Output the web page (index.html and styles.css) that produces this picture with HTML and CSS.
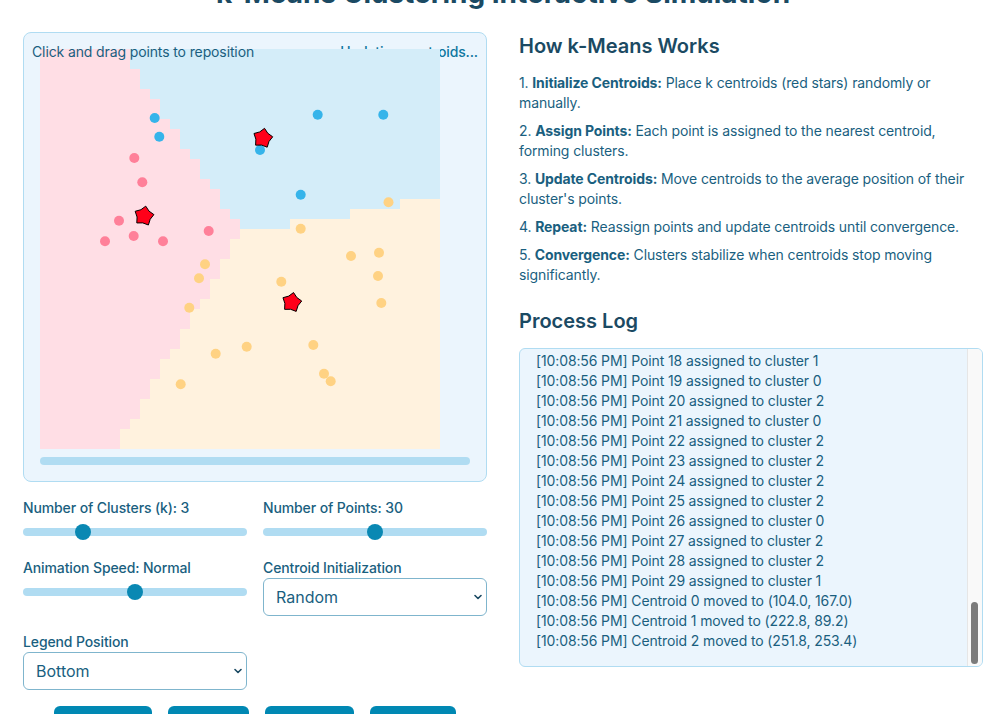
FILE: index.html
```html
<!DOCTYPE html>
<html lang="en">
<head>
<meta charset="utf-8">
<title>k-Means Clustering Interactive Simulation</title>
<link rel="stylesheet" href="styles.css">
</head>
<body>
<div class="page">
  <h1 class="title">k-Means Clustering Interactive Simulation</h1>
  <div class="layout">
    <section class="left">
      <div class="viz-card">
        <div class="status">Updating centroids...</div>
        <svg class="plot" width="400" height="400" viewBox="0 0 400 400">
          <defs>
            <polygon id="star" points="1.74,-9.85 5.04,-4.86 9.9,-1.39 6.18,3.29 4.38,8.99 -1.22,6.89 -7.19,6.95 -6.93,0.97 -8.83,-4.69 -3.07,-6.29" fill="#ff0019" stroke="#000" stroke-width="1" stroke-linejoin="miter"/>
          </defs>
          <rect x="0" y="0" width="400" height="400" fill="#fff2de"/>
          <path fill="#ffdee5" d="M0 0 H90 V20 H100 V40 H110 V50 H120 V70 H130 V80 H140 V100 H150 V110 H160 V130 H170 V140 H180 V160 H190 V170 H200 V190 H190 V210 H180 V230 H170 V250 H160 V260 H150 V280 H140 V300 H130 V310 H120 V330 H110 V350 H100 V370 H90 V380 H80 V400 H0 Z"/>
          <path fill="#d4edf9" d="M90 0 H400 V150 H360 V160 H310 V170 H250 V180 H200 V170 H190 V160 H180 V140 H170 V130 H160 V110 H150 V100 H140 V80 H130 V70 H120 V50 H110 V40 H100 V20 H90 Z"/>
          <g fill="#36b4ea">
            <circle cx="114.7" cy="69" r="5"/>
            <circle cx="119.3" cy="87.7" r="5"/>
            <circle cx="220" cy="101" r="5"/>
            <circle cx="277.7" cy="65.7" r="5"/>
            <circle cx="343.3" cy="65.7" r="5"/>
            <circle cx="260.7" cy="145.7" r="5"/>
          </g>
          <g fill="#ff8099">
            <circle cx="94.3" cy="109" r="5"/>
            <circle cx="102.3" cy="133.3" r="5"/>
            <circle cx="79" cy="171.7" r="5"/>
            <circle cx="93.7" cy="187" r="5"/>
            <circle cx="65" cy="192.3" r="5"/>
            <circle cx="123" cy="192.3" r="5"/>
            <circle cx="168.7" cy="182" r="5"/>
          </g>
          <g fill="#ffd283">
            <circle cx="348.5" cy="153.3" r="5"/>
            <circle cx="260.7" cy="179.7" r="5"/>
            <circle cx="311" cy="207" r="5"/>
            <circle cx="339" cy="203.7" r="5"/>
            <circle cx="165" cy="215.3" r="5"/>
            <circle cx="159" cy="229.3" r="5"/>
            <circle cx="241.3" cy="232.7" r="5"/>
            <circle cx="338" cy="227" r="5"/>
            <circle cx="341.3" cy="254" r="5"/>
            <circle cx="149.3" cy="258.7" r="5"/>
            <circle cx="206.7" cy="297.7" r="5"/>
            <circle cx="175.7" cy="304.7" r="5"/>
            <circle cx="273.3" cy="296" r="5"/>
            <circle cx="284" cy="324.7" r="5"/>
            <circle cx="290.7" cy="332.3" r="5"/>
            <circle cx="140.7" cy="335.3" r="5"/>
          </g>
          <use href="#star" transform="translate(104 167)"/>
          <use href="#star" transform="translate(222.8 89.2)"/>
          <use href="#star" transform="translate(251.8 253.4)"/>
        </svg>
        <div class="hint">Click and drag points to reposition</div>
        <div class="progress"></div>
      </div>

      <div class="controls">
        <div class="control">
          <label class="control-label">Number of Clusters (k): 3</label>
          <input class="range" type="range" min="2" max="6" value="3">
        </div>
        <div class="control">
          <label class="control-label">Number of Points: 30</label>
          <input class="range" type="range" min="10" max="50" value="30">
        </div>
        <div class="control">
          <label class="control-label">Animation Speed: Normal</label>
          <input class="range" type="range" min="1" max="3" value="2">
        </div>
        <div class="control">
          <label class="control-label">Centroid Initialization</label>
          <div class="select-wrap">
            <select class="select">
              <option>Random</option>
              <option>k-Means++</option>
              <option>Manual</option>
            </select>
            <svg class="chevron" width="8" height="6" viewBox="0 0 8 6"><path d="M1 1.5 L4 4.5 L7 1.5" fill="none" stroke="#1b4a63" stroke-width="1.6" stroke-linecap="round" stroke-linejoin="round"/></svg>
          </div>
        </div>
        <div class="control">
          <label class="control-label">Legend Position</label>
          <div class="select-wrap">
            <select class="select">
              <option>Bottom</option>
              <option>Top</option>
              <option>Right</option>
            </select>
            <svg class="chevron" width="8" height="6" viewBox="0 0 8 6"><path d="M1 1.5 L4 4.5 L7 1.5" fill="none" stroke="#1b4a63" stroke-width="1.6" stroke-linecap="round" stroke-linejoin="round"/></svg>
          </div>
        </div>
      </div>

      <div class="buttons">
        <button class="btn btn-wide">Initialize</button>
        <button class="btn">Start</button>
        <button class="btn">Pause</button>
        <button class="btn">Reset</button>
      </div>
    </section>

    <section class="right">
      <h2 class="heading">How k-Means Works</h2>
      <div class="steps">
        <p>1. <strong>Initialize Centroids:</strong> Place k centroids (red stars) randomly or manually.</p>
        <p>2. <strong>Assign Points:</strong> Each point is assigned to the nearest centroid, forming clusters.</p>
        <p>3. <strong>Update Centroids:</strong> Move centroids to the average position of their cluster's points.</p>
        <p>4. <strong>Repeat:</strong> Reassign points and update centroids until convergence.</p>
        <p>5. <strong>Convergence:</strong> Clusters stabilize when centroids stop moving significantly.</p>
      </div>

      <h2 class="heading log-heading">Process Log</h2>
      <div class="log-box">
        <div class="log">
          <div class="log-inner">
            <div>[10:08:54 PM] Generated 30 random points</div>
            <div>[10:08:54 PM] Number of clusters set to 3</div>
            <div>[10:08:54 PM] Simulation initialized</div>
            <div>[10:08:54 PM] Initializing 3 centroids (random)</div>
            <div>[10:08:54 PM] Centroid 0 initialized at (61.3, 212.5)</div>
            <div>[10:08:54 PM] Centroid 1 initialized at (188.4, 42.7)</div>
            <div>[10:08:54 PM] Centroid 2 initialized at (297.1, 301.9)</div>
            <div>[10:08:55 PM] Iteration 1: assigning points</div>
            <div>[10:08:55 PM] Point 0 assigned to cluster 2</div>
            <div>[10:08:55 PM] Point 1 assigned to cluster 0</div>
            <div>[10:08:55 PM] Point 2 assigned to cluster 1</div>
            <div>[10:08:55 PM] Point 3 assigned to cluster 2</div>
            <div>[10:08:55 PM] Point 4 assigned to cluster 0</div>
            <div>[10:08:55 PM] Point 5 assigned to cluster 2</div>
            <div>[10:08:55 PM] Point 6 assigned to cluster 1</div>
            <div>[10:08:55 PM] Point 7 assigned to cluster 2</div>
            <div>[10:08:55 PM] Point 8 assigned to cluster 0</div>
            <div>[10:08:55 PM] Point 9 assigned to cluster 2</div>
            <div>[10:08:55 PM] Point 10 assigned to cluster 1</div>
            <div>[10:08:55 PM] Point 11 assigned to cluster 2</div>
            <div>[10:08:55 PM] Point 12 assigned to cluster 0</div>
            <div>[10:08:55 PM] Point 13 assigned to cluster 2</div>
            <div>[10:08:55 PM] Point 14 assigned to cluster 1</div>
            <div>[10:08:55 PM] Point 15 assigned to cluster 2</div>
            <div>[10:08:55 PM] Point 16 assigned to cluster 0</div>
            <div>[10:08:55 PM] Point 17 assigned to cluster 2</div>
            <div>[10:08:55 PM] Point 18 assigned to cluster 1</div>
            <div>[10:08:55 PM] Point 19 assigned to cluster 0</div>
            <div>[10:08:55 PM] Point 20 assigned to cluster 2</div>
            <div>[10:08:55 PM] Point 21 assigned to cluster 0</div>
            <div>[10:08:55 PM] Point 22 assigned to cluster 2</div>
            <div>[10:08:55 PM] Point 23 assigned to cluster 2</div>
            <div>[10:08:55 PM] Point 24 assigned to cluster 2</div>
            <div>[10:08:55 PM] Point 25 assigned to cluster 2</div>
            <div>[10:08:55 PM] Point 26 assigned to cluster 0</div>
            <div>[10:08:55 PM] Point 27 assigned to cluster 2</div>
            <div>[10:08:55 PM] Point 28 assigned to cluster 2</div>
            <div>[10:08:55 PM] Point 29 assigned to cluster 1</div>
            <div>[10:08:55 PM] Centroid 0 moved to (98.6, 171.4)</div>
            <div>[10:08:55 PM] Centroid 1 moved to (214.2, 81.9)</div>
            <div>[10:08:55 PM] Centroid 2 moved to (259.3, 262.0)</div>
            <div>[10:08:56 PM] Iteration 2: assigning points</div>
            <div>[10:08:56 PM] Point 0 assigned to cluster 2</div>
            <div>[10:08:56 PM] Point 1 assigned to cluster 0</div>
            <div>[10:08:56 PM] Point 2 assigned to cluster 1</div>
            <div>[10:08:56 PM] Point 3 assigned to cluster 2</div>
            <div>[10:08:56 PM] Point 4 assigned to cluster 0</div>
            <div>[10:08:56 PM] Point 5 assigned to cluster 2</div>
            <div>[10:08:56 PM] Point 6 assigned to cluster 1</div>
            <div>[10:08:56 PM] Point 7 assigned to cluster 2</div>
            <div>[10:08:56 PM] Point 8 assigned to cluster 0</div>
            <div>[10:08:56 PM] Point 9 assigned to cluster 2</div>
            <div>[10:08:56 PM] Point 10 assigned to cluster 1</div>
            <div>[10:08:56 PM] Point 11 assigned to cluster 2</div>
            <div>[10:08:56 PM] Point 12 assigned to cluster 0</div>
            <div>[10:08:56 PM] Point 13 assigned to cluster 2</div>
            <div>[10:08:56 PM] Point 14 assigned to cluster 1</div>
            <div>[10:08:56 PM] Point 15 assigned to cluster 2</div>
            <div>[10:08:56 PM] Point 16 assigned to cluster 0</div>
            <div>[10:08:56 PM] Point 17 assigned to cluster 2</div>
            <div>[10:08:56 PM] Point 18 assigned to cluster 1</div>
            <div>[10:08:56 PM] Point 19 assigned to cluster 0</div>
            <div>[10:08:56 PM] Point 20 assigned to cluster 2</div>
            <div>[10:08:56 PM] Point 21 assigned to cluster 0</div>
            <div>[10:08:56 PM] Point 22 assigned to cluster 2</div>
            <div>[10:08:56 PM] Point 23 assigned to cluster 2</div>
            <div>[10:08:56 PM] Point 24 assigned to cluster 2</div>
            <div>[10:08:56 PM] Point 25 assigned to cluster 2</div>
            <div>[10:08:56 PM] Point 26 assigned to cluster 0</div>
            <div>[10:08:56 PM] Point 27 assigned to cluster 2</div>
            <div>[10:08:56 PM] Point 28 assigned to cluster 2</div>
            <div>[10:08:56 PM] Point 29 assigned to cluster 1</div>
            <div>[10:08:56 PM] Centroid 0 moved to (104.0, 167.0)</div>
            <div>[10:08:56 PM] Centroid 1 moved to (222.8, 89.2)</div>
            <div>[10:08:56 PM] Centroid 2 moved to (251.8, 253.4)</div>
          </div>
        </div>
        <div class="scrollbar"><div class="scroll-thumb"></div></div>
      </div>
    </section>
  </div>
</div>
</body>
</html>
```

FILE: styles.css
```css
* { box-sizing: border-box; }

html, body {
  margin: 0;
  padding: 0;
  background: #ffffff;
}

body {
  font-family: "Inter", "Liberation Sans", sans-serif;
  color: #1a5f7f;
  font-size: 14px;
  line-height: 20px;
  letter-spacing: -0.12px;
  overflow: hidden;
}

.page {
  width: 1007px;
  padding: 0 24px 0 23px;
}

.title {
  margin: -24px 0 22px;
  font-size: 28px;
  line-height: 34px;
  font-weight: 700;
  letter-spacing: 0;
  color: #1b4a63;
  text-align: center;
}

.layout {
  display: grid;
  grid-template-columns: 1fr 1fr;
  column-gap: 32px;
}

/* ---------- visualization card ---------- */
.viz-card {
  position: relative;
  background: #ebf5fd;
  border: 1px solid #b0dcf2;
  border-radius: 8px;
  padding: 16px;
}

.plot {
  display: block;
  position: relative;
}

.hint,
.status {
  position: absolute;
  top: 10px;
  font-size: 14px;
  line-height: 17px;
}

.hint {
  left: 8px;
  color: #1a5f7f;
}

.status {
  right: 8px;
  color: #0f77a0;
  font-weight: 500;
}

.progress {
  margin-top: 8px;
  height: 8px;
  border-radius: 4px;
  background: #b0dcf2;
}

/* ---------- controls ---------- */
.controls {
  display: grid;
  grid-template-columns: 1fr 1fr;
  column-gap: 16px;
  row-gap: 17px;
  margin-top: 17px;
}

.control {
  display: flex;
  flex-direction: column;
}

.control-label {
  display: block;
  font-size: 14px;
  line-height: 17px;
  font-weight: 500;
  color: #1a5f7f;
  margin-bottom: 2px;
}

.range {
  -webkit-appearance: none;
  appearance: none;
  width: 100%;
  height: 20px;
  margin: 4px 0 0;
  padding: 0;
  background: transparent;
}

.range::-webkit-slider-runnable-track {
  height: 8px;
  border-radius: 4px;
  background: #b0dcf2;
}

.range::-webkit-slider-thumb {
  -webkit-appearance: none;
  appearance: none;
  width: 16px;
  height: 16px;
  border-radius: 50%;
  background: #0a88b3;
  margin-top: -4px;
  border: none;
}

.select-wrap {
  position: relative;
}

.select {
  -webkit-appearance: none;
  appearance: none;
  display: block;
  width: 100%;
  height: 38px;
  padding: 0 12px;
  border: 1px solid #7fb5cd;
  border-radius: 6px;
  background: #ffffff;
  font-family: "Inter", "Liberation Sans", sans-serif;
  font-size: 16px;
  color: #1a5f7f;
}

.chevron {
  position: absolute;
  right: 5px;
  top: 16px;
  pointer-events: none;
}

.buttons {
  display: flex;
  justify-content: center;
  gap: 16px;
  margin-top: 16px;
}

.btn {
  height: 38px;
  padding: 0 24px;
  border: none;
  border-radius: 6px;
  background: #0088b3;
  color: #ffffff;
  font-family: "Inter", "Liberation Sans", sans-serif;
  font-size: 14px;
  font-weight: 600;
}

.btn-wide {
  padding: 0 21px;
}

/* ---------- right column ---------- */
.heading {
  margin: 0 0 13px;
  font-size: 20px;
  line-height: 28px;
  font-weight: 600;
  letter-spacing: 0;
  color: #1b4a63;
}

.steps {
  display: flex;
  flex-direction: column;
  gap: 8px;
}

.steps p {
  margin: 0;
}

.steps strong {
  font-weight: 700;
}

.log-heading {
  margin-top: 22px;
}

.log-box {
  position: relative;
  height: 319px;
  background: #ebf5fd;
  border: 1px solid #b0dcf2;
  border-radius: 6px;
  overflow: hidden;
}

.log {
  height: 100%;
  overflow-y: auto;
  scrollbar-width: none;
  display: flex;
  flex-direction: column-reverse;
}

.log::-webkit-scrollbar {
  display: none;
}

.log-inner {
  padding: 16px 16px 15px;
  white-space: nowrap;
}

.scrollbar {
  position: absolute;
  top: 0;
  right: 0;
  bottom: 0;
  width: 15px;
  background: #f9f9f9;
  border-left: 1px solid #e6e6e6;
}

.scroll-thumb {
  position: absolute;
  left: 3px;
  bottom: 2px;
  width: 7px;
  height: 62px;
  border-radius: 4px;
  background: #7b7b7b;
}
```
